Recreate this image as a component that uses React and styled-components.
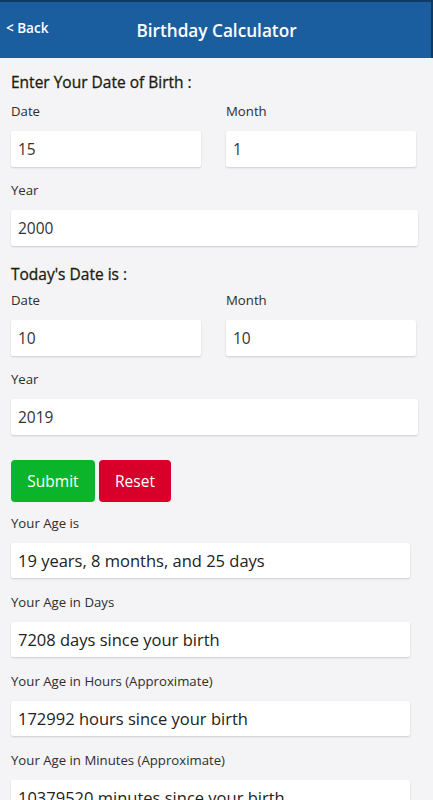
import React from "react";
import styled, { createGlobalStyle } from "styled-components";

const GlobalStyle = createGlobalStyle`
  html, body {
    margin: 0;
    padding: 0;
    background: #f4f3f6;
    font-family: "Open Sans", "Noto Sans", sans-serif;
  }
`;

const Page = styled.div`
  width: 433px;
  min-height: 800px;
  background: #f4f3f6;
`;

const Header = styled.header`
  height: 56px;
  display: flex;
  align-items: center;
  justify-content: center;
  position: relative;
  background: #1b5e9f;
  border-top: 2px solid #0f3a64;
  border-right: 2px solid #0f3a64;
  color: #fff;
`;

const BackButton = styled.span`
  position: absolute;
  left: 6px;
  top: 17px;
  font-size: 13.5px;
  font-weight: 600;
  color: #fff;
`;

const Title = styled.h1`
  margin: 0 0 0 2px;
  font-size: 17.2px;
  font-weight: 600;
`;

const Content = styled.main`
  padding: 12px 15px 0 11px;
`;

const SectionTitle = styled.h2`
  margin: ${(p) => (p.$first ? "0" : "16px")} 0 ${(p) => (p.$first ? "7px" : "4px")};
  font-size: 15.5px;
  line-height: 24px;
  font-weight: 500;
  -webkit-text-stroke: 0.3px #1c1c0c;
  color: #1c1c0c;
`;

const Row = styled.div`
  display: grid;
  grid-template-columns: 190px 190px;
  column-gap: 25px;
`;

const Field = styled.div`
  display: flex;
  flex-direction: column;
  margin-bottom: ${(p) => p.$gap || "13px"};
`;

const Label = styled.label`
  font-size: 13.2px;
  line-height: 20px;
  color: #2e2e2e;
  margin-bottom: 10px;
`;

const Input = styled.div`
  height: 36px;
  display: flex;
  align-items: center;
  padding: 0 7px;
  background: #fff;
  border-radius: 2px;
  box-shadow: 0 1px 2px rgba(0, 0, 0, 0.16);
  font-size: 15.5px;
  color: #333;
  width: ${(p) => (p.$full ? "407px" : "auto")};
  box-sizing: border-box;
`;

const Buttons = styled.div`
  display: flex;
  gap: 4px;
  margin: 25px 0 11px;
`;

const Button = styled.button`
  height: 42px;
  padding: 0;
  width: ${(p) => p.$width};
  border: none;
  border-radius: 4px;
  background: ${(p) => p.$bg};
  color: #fff;
  font-family: inherit;
  font-size: 15.5px;
`;

const Result = styled.div`
  height: 35px;
  width: 399px;
  display: flex;
  align-items: center;
  padding: 0 7px;
  box-sizing: border-box;
  background: #fff;
  border-radius: 2px;
  box-shadow: 0 1px 2px rgba(0, 0, 0, 0.16);
  font-size: 16.5px;
  color: #222;
  white-space: nowrap;
  overflow: hidden;
`;

const results = [
  ["Your Age is", "19 years, 8 months, and 25 days"],
  ["Your Age in Days", "7208 days since your birth"],
  ["Your Age in Hours (Approximate)", "172992 hours since your birth"],
  ["Your Age in Minutes (Approximate)", "10379520 minutes since your birth"],
];

function DateGroup({ title, first, date, month, year }) {
  return (
    <>
      <SectionTitle $first={first}>{title}</SectionTitle>
      <Row>
        <Field>
          <Label>Date</Label>
          <Input>{date}</Input>
        </Field>
        <Field>
          <Label>Month</Label>
          <Input>{month}</Input>
        </Field>
      </Row>
      <Field $gap="0">
        <Label>Year</Label>
        <Input $full>{year}</Input>
      </Field>
    </>
  );
}

export default function App() {
  return (
    <Page>
      <GlobalStyle />
      <Header>
        <BackButton>&lt; Back</BackButton>
        <Title>Birthday Calculator</Title>
      </Header>
      <Content>
        <DateGroup title="Enter Your Date of Birth :" first date="15" month="1" year="2000" />
        <DateGroup title="Today's Date is :" date="10" month="10" year="2019" />
        <Buttons>
          <Button $bg="#0bb52b" $width="84px">Submit</Button>
          <Button $bg="#d8002b" $width="72px">Reset</Button>
        </Buttons>
        {results.map(([label, value]) => (
          <Field key={label} $gap="14px">
            <Label>{label}</Label>
            <Result>{value}</Result>
          </Field>
        ))}
      </Content>
    </Page>
  );
}
